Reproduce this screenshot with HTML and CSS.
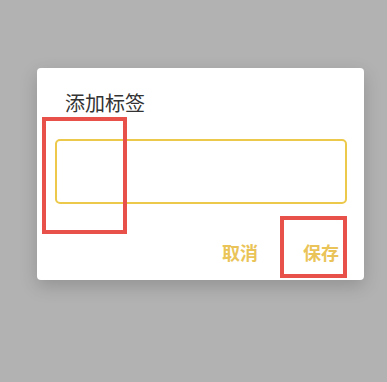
FILE: index.html
```html
<!DOCTYPE html>
<html>
<head>
<meta charset="utf-8">
<link rel="stylesheet" href="styles.css">
</head>
<body>
<div class="screen">
  <div class="dialog">
    <div class="title">添加标签</div>
    <div class="input"></div>
    <div class="actions">
      <span class="btn">取消</span>
      <span class="btn">保存</span>
    </div>
  </div>
  <div class="mark mark-input"></div>
  <div class="mark mark-save"></div>
</div>
</body>
</html>
```
FILE: styles.css
```css
html, body {
  margin: 0;
  padding: 0;
  background: #b2b2b2;
  font-family: "Noto Sans CJK SC", "Noto Sans", sans-serif;
}
.screen {
  position: relative;
  width: 387px;
  height: 382px;
  padding-top: 68px;
  box-sizing: border-box;
}
.dialog {
  margin-left: 37px;
  width: 327px;
  height: 212px;
  background: #fff;
  border-radius: 4px;
  box-shadow: 0 6px 18px rgba(0,0,0,0.18);
  box-sizing: border-box;
  padding: 21px 17px 0 18px;
  display: flex;
  flex-direction: column;
}
.title {
  font-size: 20px;
  line-height: 28px;
  color: #333;
  padding-left: 10px;
}
.input {
  margin-top: 22px;
  height: 65px;
  border: 2px solid #ecc94b;
  border-radius: 5px;
  box-sizing: border-box;
}
.actions {
  display: flex;
  justify-content: flex-end;
  gap: 45px;
  margin-top: 36px;
  padding-right: 8px;
}
.btn {
  font-size: 18px;
  line-height: 24px;
  font-weight: 700;
  color: #eac458;
}
.mark {
  position: absolute;
  border: 4px solid #e8514a;
  box-sizing: border-box;
}
.mark-input {
  left: 42px;
  top: 117px;
  width: 85px;
  height: 117px;
}
.mark-save {
  left: 280px;
  top: 216px;
  width: 67px;
  height: 62px;
}
```
